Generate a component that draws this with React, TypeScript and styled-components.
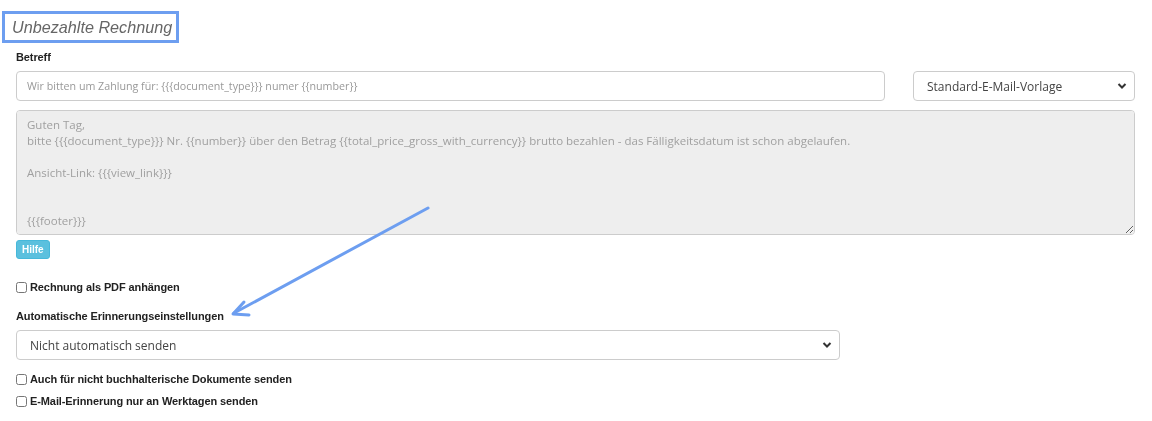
import React from "react";
import styled, { createGlobalStyle } from "styled-components";

const Global = createGlobalStyle`
  html, body { margin: 0; padding: 0; background: #fff; }
  body { font-family: "Liberation Sans", Arial, sans-serif; }
`;

const Page = styled.div`
  position: relative;
  width: 1152px;
  height: 421px;
  box-sizing: border-box;
  padding: 11px 17px 0 16px;
  overflow: hidden;
`;

const Heading = styled.h2`
  display: inline-block;
  margin: 0 0 0 -14px;
  padding: 0 4px 0 7px;
  height: 32px;
  line-height: 27px;
  box-sizing: border-box;
  border: 3px solid #6d9ef0;
  font-family: "Liberation Sans", Arial, sans-serif;
  font-style: italic;
  font-weight: normal;
  font-size: 16.2px;
  color: #666;
`;

const Label = styled.div<{ $top: number }>`
  margin-top: ${(p) => p.$top}px;
  font-size: 11px;
  font-weight: bold;
  letter-spacing: -0.1px;
  color: #222;
  line-height: 14px;
`;

const Row = styled.div`
  display: flex;
  gap: 28px;
  margin-top: 7px;
`;

const fieldFont = `"Open Sans", "DejaVu Sans", sans-serif`;

const TextInput = styled.input`
  flex: 1;
  height: 30px;
  box-sizing: border-box;
  border: 1px solid #ccc;
  border-radius: 4px;
  padding: 0 10px;
  font-family: ${fieldFont};
  font-size: 10.7px;
  color: #555;
  &::placeholder { color: #999; }
`;

const SelectWrap = styled.div<{ $width: number; $top?: number }>`
  position: relative;
  width: ${(p) => p.$width}px;
  height: 30px;
  margin-top: ${(p) => p.$top ?? 0}px;
`;

const Select = styled.select`
  appearance: none;
  width: 100%;
  height: 100%;
  box-sizing: border-box;
  border: 1px solid #ccc;
  border-radius: 4px;
  background: #fff;
  padding: 0 10px 0 13px;
  font-family: ${fieldFont};
  font-size: 12px;
  color: #444;
`;

const Chevron = styled.svg`
  position: absolute;
  right: 8px;
  top: 11px;
  width: 10px;
  height: 8px;
  pointer-events: none;
`;

const TextArea = styled.textarea`
  display: block;
  width: 100%;
  height: 125px;
  margin-top: 9px;
  box-sizing: border-box;
  border: 1px solid #ccc;
  border-radius: 4px;
  background: #eee;
  padding: 6px 10px;
  font-family: ${fieldFont};
  font-size: 11.5px;
  line-height: 16px;
  color: #a0a0a0;
  resize: vertical;
`;

const HelpButton = styled.button`
  display: block;
  margin-top: 5px;
  height: 19px;
  padding: 0 5px;
  border: 1px solid #46b8da;
  border-radius: 3px;
  background: #5bc0de;
  color: #fff;
  font-family: "Liberation Sans", Arial, sans-serif;
  font-weight: bold;
  font-size: 10px;
`;

const CheckRow = styled.label<{ $top: number }>`
  display: flex;
  align-items: center;
  gap: 3px;
  margin-top: ${(p) => p.$top}px;
  height: 14px;
  font-size: 11px;
  font-weight: bold;
  letter-spacing: -0.1px;
  color: #222;
`;

const Box = styled.input`
  margin: 0;
  width: 11px;
  height: 11px;
`;

const ArrowLayer = styled.svg`
  position: absolute;
  left: 0;
  top: 0;
  pointer-events: none;
`;

const ChevronIcon = () => (
  <Chevron viewBox="0 0 10 8">
    <path d="M1.5 2 L5 5.5 L8.5 2" fill="none" stroke="#333" strokeWidth="2" />
  </Chevron>
);

export default function App() {
  return (
    <>
      <Global />
      <Page>
        <Heading>Unbezahlte Rechnung</Heading>
        <Label $top={7}>Betreff</Label>
        <Row>
          <TextInput placeholder="Wir bitten um Zahlung für: {{{document_type}}} numer {{number}}" />
          <SelectWrap $width={222}>
            <Select defaultValue="std">
              <option value="std">Standard-E-Mail-Vorlage</option>
            </Select>
            <ChevronIcon />
          </SelectWrap>
        </Row>
        <TextArea
          readOnly
          defaultValue={
            "Guten Tag,\nbitte {{{document_type}}} Nr. {{number}} über den Betrag {{total_price_gross_with_currency}} brutto bezahlen - das Fälligkeitsdatum ist schon abgelaufen.\n\nAnsicht-Link: {{{view_link}}}\n\n\n{{{footer}}}"
          }
        />
        <HelpButton>Hilfe</HelpButton>
        <CheckRow $top={21}>
          <Box type="checkbox" />
          Rechnung als PDF anhängen
        </CheckRow>
        <Label $top={15}>Automatische Erinnerungseinstellungen</Label>
        <SelectWrap $width={824} $top={7}>
          <Select defaultValue="none">
            <option value="none">Nicht automatisch senden</option>
          </Select>
          <ChevronIcon />
        </SelectWrap>
        <CheckRow $top={12}>
          <Box type="checkbox" />
          Auch für nicht buchhalterische Dokumente senden
        </CheckRow>
        <CheckRow $top={8}>
          <Box type="checkbox" />
          E-Mail-Erinnerung nur an Werktagen senden
        </CheckRow>
        <ArrowLayer width="1152" height="421">
          <line x1="428" y1="208" x2="234" y2="313" stroke="#6d9ef0" strokeWidth="3" strokeLinecap="round" />
          <path d="M244 302 L233 314 L249 315" fill="none" stroke="#6d9ef0" strokeWidth="3" strokeLinecap="round" strokeLinejoin="round" />
        </ArrowLayer>
      </Page>
    </>
  );
}
